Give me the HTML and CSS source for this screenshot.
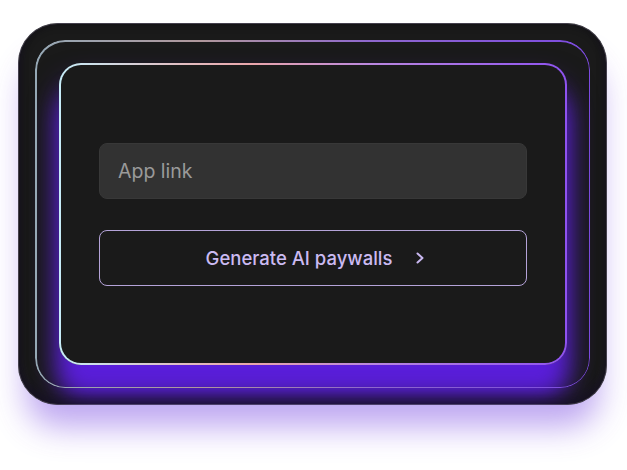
FILE: index.html
```html
<!DOCTYPE html>
<html lang="en">
<head>
    <meta charset="UTF-8">
    <meta name="viewport" content="width=device-width, initial-scale=1.0">
    <title>Generate AI paywalls</title>
    <link rel="stylesheet" href="styles.css">
</head>
<body>

<div class="card">
    <div class="ring">
        <div class="panel">
            <form class="generate-form">
                <input type="text" class="app-link" placeholder="App link">
                <button type="button" class="generate-btn">
                    <span>Generate AI paywalls</span>
                    <svg width="12" height="14" viewBox="0 0 12 14">
                        <path d="M3.5 2.5l5 4.5-5 4.5" fill="none" stroke="#c9b8f0" stroke-width="2" stroke-linecap="round" stroke-linejoin="round"/>
                    </svg>
                </button>
            </form>
        </div>
    </div>
</div>

</body>
</html>
```

FILE: styles.css
```css
html {
    height: 100%;
    background-color: #fff;
}
body {
    margin: 0;
    min-height: 470px;
    padding: 23px 0 0 18px;
    box-sizing: border-box;
    background-color: #fff;
    font-family: Inter, "Noto Sans", sans-serif;
}
.card {
    position: relative;
    width: 589px;
    height: 382px;
    box-sizing: border-box;
    padding: 17px;
    border-radius: 40px;
    background-color: #1a1a1a;
    overflow: hidden;
    box-shadow: 0 30px 32px -8px rgba(110, 60, 225, 0.45);
}
/* dark rim and bottom shade over the glow */
.card::after {
    content: "";
    position: absolute;
    inset: 0;
    border-radius: 40px;
    border: 1px solid rgba(120, 110, 140, 0.45);
    box-shadow: inset 0 -8px 10px rgba(25, 12, 55, 0.3), inset 0 0 8px rgba(10, 8, 20, 0.45);
    pointer-events: none;
}
.ring {
    position: relative;
    height: 100%;
    box-sizing: border-box;
    padding: 23px 23px 23px 24px;
    border-radius: 30px;
}
/* thin gradient line of the middle ring */
.ring::before {
    content: "";
    position: absolute;
    inset: 0;
    border-radius: 30px;
    padding: 1.5px;
    background: linear-gradient(90deg, #95a8b5 0%, #b0979b 30%, #8f68cc 60%, #7c4ae0 100%);
    -webkit-mask: linear-gradient(#000 0 0) content-box, linear-gradient(#000 0 0);
    -webkit-mask-composite: xor;
    mask-composite: exclude;
    z-index: 1;
    pointer-events: none;
}
.panel {
    height: 100%;
    box-sizing: border-box;
    display: flex;
    align-items: center;
    padding: 0 38px;
    border: 2px solid transparent;
    border-radius: 22px;
    background: linear-gradient(#1a1a1a, #1a1a1a) padding-box,
                linear-gradient(90deg, #c6ecf8 0%, #e2bcc0 25%, #eaa6ab 38%, #b986e0 62%, #8e52f0 100%) border-box;
    box-shadow: 0 32px 24px rgba(90, 30, 218, 1), 0 18px 28px rgba(95, 40, 220, 0.5);
}
.generate-form {
    width: 100%;
    display: flex;
    flex-direction: column;
    gap: 31px;
}
.app-link {
    height: 56px;
    box-sizing: border-box;
    padding: 0 18px;
    border: 1px solid #383838;
    border-radius: 8px;
    background-color: #323232;
    font-family: Inter, "Noto Sans", sans-serif;
    font-size: 19.5px;
    color: #ddd;
    outline: none;
}
.app-link::placeholder {
    color: #9a9a9a;
}
.generate-btn {
    height: 56px;
    display: flex;
    align-items: center;
    justify-content: center;
    gap: 22px;
    padding: 0 0 0 6px;
    border: 1px solid #b4a3d8;
    border-radius: 8px;
    background-color: #1a1a1a;
    font-family: Inter, "Noto Sans", sans-serif;
    font-size: 18.5px;
    font-weight: 500;
    color: #cbbaf2;
    cursor: pointer;
}
```
